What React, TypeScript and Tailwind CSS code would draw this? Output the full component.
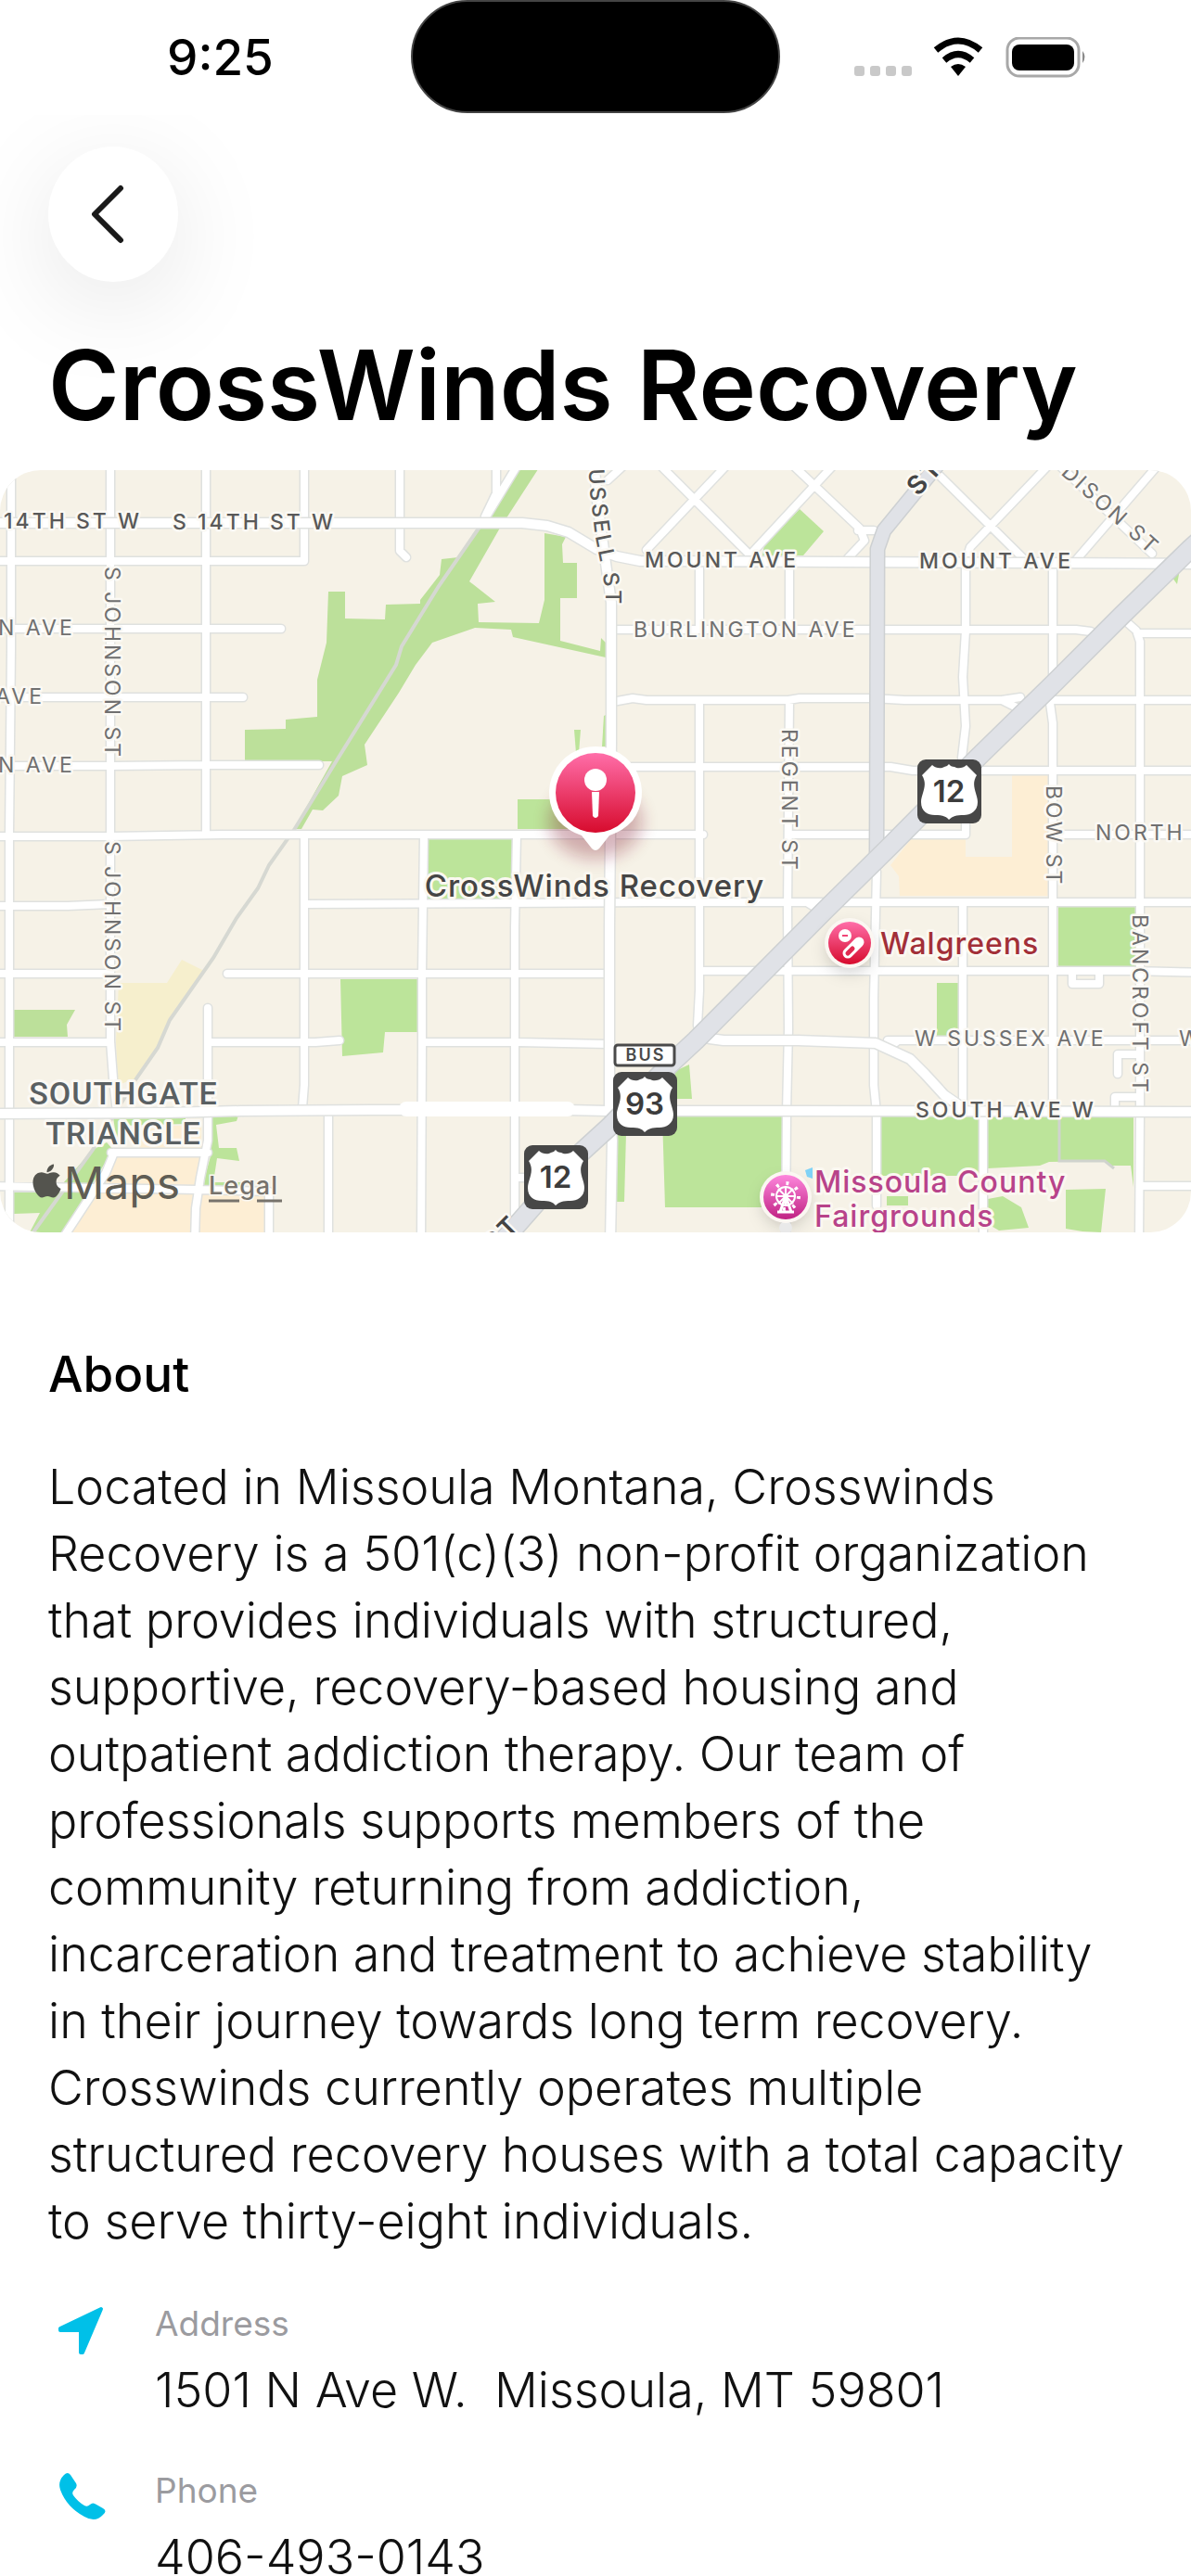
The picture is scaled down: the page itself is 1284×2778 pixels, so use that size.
import type { ReactNode } from 'react';
import { FaApple } from 'react-icons/fa';

interface Area {
  fill: string;
  points: string;
}

interface StreetLabel {
  text: string;
  x: number;
  y: number;
  rotate?: number;
  major?: boolean;
}

const GREEN = '#bce49a';
const WOODS = '#bce09a';
const SHOPS = '#fdeed4';
const SAND = '#f6efcd';

const AREAS: Area[] = [
  {
    fill: WOODS,
    points:
      '354,638 372,638 372,667 415,668 416,652 453,651 453,647 474,620 476,603 494,601 560,500 584,500 538,571 506,627 534,649 515,651 516,671 581,672 587,647 587,575 610,579 606,587 607,607 622,607 622,645 604,645 604,691 647,702 648,688 653,693 653,709 553,687 551,679 512,677 466,693 448,717 430,747 393,803 396,825 369,837 365,858 348,874 337,873 325,894 317,894 358,821 264,821 264,787 308,786 308,776 342,773 342,733 352,693',
  },
  { fill: GREEN, points: '619,787 626,787 624,812 621,812' },
  { fill: GREEN, points: '651,772 655,770 655,805 649,805' },
  { fill: GREEN, points: '558,862 620,862 620,894 558,894' },
  { fill: GREEN, points: '461,905 552,905 552,970 461,970' },
  { fill: GREEN, points: '862,549 888,573 866,599 822,599 824,587' },
  { fill: GREEN, points: '1272,614 1264,623 1269,630' },
  { fill: WOODS, points: '15,1089 81,1089 72,1105 73,1118 15,1118' },
  { fill: GREEN, points: '367,1056 450,1056 450,1113 415,1113 413,1135 369,1139' },
  { fill: SAND, points: '128,1060 180,1060 196,1035 220,1047 183,1100 170,1130 147,1163 127,1170 125,1123' },
  { fill: GREEN, points: '122,1205 200,1205 200,1212 128,1214 126,1232' },
  { fill: SHOPS, points: '150,1214 217,1214 217,1238 150,1238' },
  {
    fill: GREEN,
    points:
      '228,1203 257,1203 255,1209 233,1213 236,1238 255,1238 258,1252 234,1249 230,1275 260,1275 260,1279 218,1279 227,1247',
  },
  { fill: GREEN, points: '100,1240 115,1232 122,1240 67,1329 32,1329 43,1308 15,1309 15,1284 68,1276' },
  { fill: SHOPS, points: '127,1247 217,1247 207,1330 76,1330' },
  { fill: SHOPS, points: '215,1288 287,1288 287,1330 214,1330' },
  { fill: GREEN, points: '728,1155 743,1148 746,1185 728,1185' },
  { fill: GREEN, points: '664,1222 675,1222 673,1296 664,1296' },
  { fill: GREEN, points: '714,1204 843,1204 843,1302 717,1302' },
  { fill: GREEN, points: '1141,978 1224,978 1224,1042 1141,1042' },
  { fill: GREEN, points: '1010,1060 1033,1060 1033,1117 1010,1117' },
  { fill: GREEN, points: '949,1204 1055,1204 1055,1268 949,1268' },
  {
    fill: GREEN,
    points: '1065,1205 1222,1205 1222,1280 1219,1257 1197,1257 1191,1252 1131,1253 1121,1257 1065,1260',
  },
  { fill: GREEN, points: '1149,1283 1192,1282 1187,1329 1167,1328 1149,1325' },
  { fill: GREEN, points: '1065,1293 1081,1290 1101,1302 1109,1324 1077,1327 1065,1320' },
  { fill: GREEN, points: '956,1290 979,1290 979,1300 956,1300' },
  { fill: '#7fd3f7', points: '868,1262 876,1259 876,1271 870,1269' },
  {
    fill: SHOPS,
    points: '982,905 1041,905 1041,924 1091,924 1091,836 1130,836 1130,966 970,966 969,945 960,933',
  },
];

const MINOR_ROADS = [
  'M12 500 V700 L10 900 V1340',
  'M119 500 V1123 L122 1163 L126 1200',
  'M222 500 V899',
  'M328 500 V605 H-10',
  'M431 500 V594 L438 601',
  'M-10 678 H303',
  'M-10 752 H262',
  'M-10 826 L120 826 L222 825 H344',
  'M-10 902 L118 902 L240 900 H758',
  'M535 500 V532 L523 557',
  'M557 503 L520 564',
  'M328 900 V1170 L326 1195',
  'M-10 977 H73 L118 975',
  'M328 975 L550 974 L700 973 H1300',
  'M-10 1050 H119',
  'M245 1050 H652',
  'M756 1047 H1220 L1300 1049',
  'M-10 1124 H119',
  'M228 1124 H340 L366 1122',
  'M455 1124 H560 L656 1126',
  'M224 1087 V1230 L216 1270 L211 1303 L210 1340',
  'M354 1200 V1340',
  'M457 900 L455 1050 L455 1130 L454 1340',
  'M557 900 L555 1000 V1310',
  'M555 1270 H575',
  'M-10 1279 L213 1283 L290 1285 V1340',
  'M120 1243 H224',
  'M123 1243 L114 1265 L70 1332',
  'M754 606 V679',
  'M851 606 V679',
  'M659 679 H1160 L1176 681',
  'M660 757 L682 753 L697 755 H850 L862 753 H940 L975 755 H1080 L1096 763',
  'M1080 755 L1100 752',
  'M754 755 V1068 L752 1106',
  'M851 755 L849 980 L850 1110 L848 1200 L847 1340',
  'M680 827 H960 L984 831 H1300',
  'M850 900 H1041 V860',
  'M1041 606 V680 L1038 730 L1041 783 L1037 817',
  'M1135 606 V740 L1132 758 L1135 780 V1195',
  'M1134 755 H1300',
  'M1216 672 L1225 680 L1229 692 V1200 L1228 1340',
  'M1227 683 H1300',
  'M1134 900 H1300',
  'M860 973 H870 L878 978',
  'M945 940 L942 1077 V1170 L945 1200 V1300',
  'M1038 973 V1190',
  'M957 1122 H1300',
  'M957 1130 L966 1124',
  'M1060 1200 V1340',
  'M1156 1049 V1061 H1185 V1049',
  'M1205 1158 V1137 H1229',
  'M1202 1196 V1183 H1229',
  'M1229 1279 H1300',
  'M710 500 L807 597',
  'M785 500 L697 593',
  'M680 495 L655 518',
  'M900 500 L810 597',
  'M853 500 L927 570 L932 583 L914 602',
  'M925 572 H942',
  'M1013 513 L1105 604',
  'M1132 500 L1046 590 L1041 606',
  'M1248 502 L1160 604',
  'M1140 500 L1242 597',
];

const MAJOR_ROADS = [
  'M-10 564 H563 L590 567 L613 574 L643 592 L665 600 L690 605 L900 606 L1300 608',
  'M640 495 L645 550 L652 600 L659 650 V800 L657 1000 L657 1190 L660 1230 L658 1340',
  'M-10 1201 L180 1200 L260 1198 L400 1197 H610 L655 1198 H860 L1300 1199',
  'M765 1120 L780 1122 H860 L944 1125 L981 1142 L997 1158 L1018 1181 L1037 1194',
];

const US_HIGHWAY = [
  'M1310 568 L1284 591 L1210 663 L1136 737 L1054 817 L960 912 L887 984 L750 1122 L722 1148 L657 1215 L623 1246 L545 1335',
];

const STEPHENS_AVE = ['M1016 495 L953 572 L946 592 L945 930'];

const STREETS: StreetLabel[] = [
  { text: '14TH ST W', x: 4, y: 570, major: true },
  { text: 'S 14TH ST W', x: 186, y: 571, major: true },
  { text: 'N AVE', x: -2, y: 685 },
  { text: 'AVE', x: -5, y: 759 },
  { text: 'N AVE', x: -2, y: 833 },
  { text: 'S JOHNSON ST', x: 113, y: 611, rotate: 90 },
  { text: 'S JOHNSON ST', x: 113, y: 907, rotate: 90 },
  { text: 'MOUNT AVE', x: 695, y: 612, major: true },
  { text: 'MOUNT AVE', x: 991, y: 613, major: true },
  { text: 'BURLINGTON AVE', x: 683, y: 687 },
  { text: 'REGENT ST', x: 843, y: 786, rotate: 90 },
  { text: 'DISON ST', x: 1143, y: 511, rotate: 42 },
  { text: 'BOW ST', x: 1128, y: 847, rotate: 90 },
  { text: 'NORTH', x: 1181, y: 906 },
  { text: 'BANCROFT ST', x: 1221, y: 986, rotate: 90 },
  { text: 'W SUSSEX AVE', x: 986, y: 1128 },
  { text: 'W', x: 1271, y: 1128 },
  { text: 'SOUTH AVE W', x: 987, y: 1205, major: true },
];

const Roads = ({ paths, fill, casing, width }: { paths: string[]; fill: string; casing: string; width: number }) => (
  <>
    <path d={paths.join(' ')} fill="none" stroke={casing} strokeWidth={width + 3} strokeLinecap="round" strokeLinejoin="round" />
    <path d={paths.join(' ')} fill="none" stroke={fill} strokeWidth={width} strokeLinecap="round" strokeLinejoin="round" />
  </>
);

const Shield = ({ x, y, route }: { x: number; y: number; route: string }) => (
  <g transform={`translate(${x} ${y})`}>
    <rect width="69" height="69" rx="9" fill="#474747" />
    <path
      d="M16 6 C20 10 26 10 29 8 Q32 8 34 5 Q36 8 40 8 C43 10 49 10 53 6 L64 17 C57 28 65 37 65 46 C65 56 57 60 50 60 C42 60 38 61 34 65 C31 61 27 60 19 60 C11 60 4 56 4 46 C4 37 12 28 5 17 Z"
      fill="#fff"
    />
    <text x="34" y="46" textAnchor="middle" fill="#3c3c3c" className="text-[33px] font-semibold">
      {route}
    </text>
  </g>
);

const FacilityMap = () => (
  <svg viewBox="0 507 1284 822" className="block w-full rounded-[44px]" role="img" aria-label="Map of CrossWinds Recovery">
    <defs>
      <linearGradient id="pin" x1="0" y1="0" x2="0" y2="1">
        <stop offset="0" stopColor="#ff6ea9" />
        <stop offset="1" stopColor="#d70b2d" />
      </linearGradient>
      <linearGradient id="fair" x1="0" y1="0" x2="0" y2="1">
        <stop offset="0" stopColor="#fd86dc" />
        <stop offset="1" stopColor="#c02283" />
      </linearGradient>
      <filter id="soft" x="-50%" y="-50%" width="200%" height="200%">
        <feGaussianBlur stdDeviation="9" />
      </filter>
      <path id="russell" d="M634 488 L636 530 L642 580 L650 620 L653 640 V690" />
    </defs>

    <rect y="507" width="1284" height="822" fill="#f6f2e7" />
    {AREAS.map((area) => (
      <polygon key={area.points} points={area.points} fill={area.fill} />
    ))}

    {/* Rail line and footpaths */}
    <path
      d="M520 564 L473 632 L433 697 L427 717 L363 820 L317 895 L290 933 L278 958 L255 990 L230 1033 L183 1100 L170 1130 L147 1163 L100 1240 L35 1330"
      fill="none"
      stroke="#d6d8d2"
      strokeWidth="4"
    />
    <path d="M1142 1207 V1252 H1191 L1201 1260" fill="none" stroke="#d0d3ce" strokeWidth="3" />

    <Roads paths={MINOR_ROADS} fill="#fff" casing="#dfe1df" width={8} />
    <Roads paths={MAJOR_ROADS} fill="#fff" casing="#dfe1df" width={10} />
    <path d="M438 1196 H612" stroke="#fff" strokeWidth="16" strokeLinecap="round" />
    <Roads paths={STEPHENS_AVE} fill="#e0e2e7" casing="#cdd0d2" width={14} />
    <Roads paths={US_HIGHWAY} fill="#e0e2e7" casing="#cdd0d2" width={19} />

    {/* Street names */}
    <g stroke="#fbf9f4" strokeWidth="5" strokeLinejoin="round" paintOrder="stroke" className="text-[23px] tracking-[3px]">
      {STREETS.map((street) => (
        <text
          key={`${street.text}-${street.x}-${street.y}`}
          transform={`translate(${street.x} ${street.y}) rotate(${street.rotate ?? 0})`}
          fill={street.major ? '#595959' : '#707070'}
          className={street.major ? 'font-medium' : undefined}
        >
          {street.text}
        </text>
      ))}
      <text fill="#595959" className="font-medium">
        <textPath href="#russell">RUSSELL ST</textPath>
      </text>
      <text transform="translate(990 536) rotate(-48)" fill="#444" className="text-[28px] font-semibold">ST</text>
      <text transform="translate(533 1352) rotate(-45)" fill="#444" className="text-[28px] font-semibold">ST</text>
    </g>

    <g
      fill="#5a6062"
      stroke="#fbf9f4"
      strokeWidth="6"
      strokeLinejoin="round"
      paintOrder="stroke"
      textAnchor="middle"
      className="font-['Roboto',sans-serif] text-[34px] font-medium tracking-[1px]"
    >
      <text x="133" y="1191">SOUTHGATE</text>
      <text x="133" y="1234">TRIANGLE</text>
    </g>

    <Shield x={989} y={819} route="12" />
    <rect x="663" y="1127" width="64" height="22" rx="3" fill="#fff" stroke="#4a4a4a" strokeWidth="3" />
    <text x="696" y="1144" textAnchor="middle" fill="#4a4a4a" className="text-[18px] font-semibold tracking-[2px]">BUS</text>
    <Shield x={661} y={1156} route="93" />
    <Shield x={565} y={1235} route="12" />

    {/* Walgreens */}
    <circle cx="916" cy="1024" r="24" fill="#00000033" filter="url(#soft)" />
    <circle cx="916" cy="1017" r="27" fill="#fbf7f2" />
    <circle cx="916" cy="1017" r="23" fill="url(#pin)" />
    <circle cx="911" cy="1009" r="7" fill="#fff" />
    <path d="M908 1009 H914" stroke="#f04577" strokeWidth="2" />
    <path d="M926 1016 L914 1028" stroke="#fff" strokeWidth="11" strokeLinecap="round" />
    <path d="M919 1023 L914 1028" stroke="#e02a50" strokeWidth="5" strokeLinecap="round" />

    {/* Fairgrounds */}
    <circle cx="847" cy="1298" r="24" fill="#00000033" filter="url(#soft)" />
    <circle cx="847" cy="1324" r="7" fill="#e9e9e9" />
    <circle cx="847" cy="1291" r="28" fill="#fbf7f2" />
    <circle cx="847" cy="1291" r="24" fill="url(#fair)" />
    <g fill="none" stroke="#fff" strokeWidth="2">
      <circle cx="847" cy="1290" r="10" />
      <circle cx="847" cy="1290" r="14" strokeWidth="4" strokeDasharray="3 8" />
      <path d="M847 1279 V1301 M836 1290 H858 M839 1282 L855 1298 M855 1282 L839 1298" />
      <path d="M847 1290 L841 1307 M847 1290 L853 1307 M838 1307 H856" strokeWidth="3" />
    </g>

    {/* Place names */}
    <g stroke="#fbf8f1" strokeWidth="6" strokeLinejoin="round" paintOrder="stroke" className="text-[32px] font-medium tracking-[1px]">
      <text x="949" y="1029" fill="#a22f38">Walgreens</text>
      <text x="878" y="1286" fill="#b8438a">Missoula County</text>
      <text x="878" y="1323" fill="#b8438a">Fairgrounds</text>
      <text x="641" y="967" textAnchor="middle" fill="#454545" className="text-[33px]">CrossWinds Recovery</text>
    </g>

    {/* Selected place */}
    <ellipse cx="642" cy="886" rx="50" ry="40" fill="#7a1028" opacity="0.3" filter="url(#soft)" />
    <path d="M642 805 A50 50 0 0 1 682 885 Q672 896 657 901 L646 915 Q642 919 638 915 L627 901 Q612 896 602 885 A50 50 0 0 1 642 805 Z" fill="#fff" />
    <circle cx="642" cy="855" r="43" fill="url(#pin)" />
    <circle cx="642" cy="841" r="12" fill="#fff" />
    <path d="M638 854 H646 L645 880 Q642 884 639 880 Z" fill="#fff" />

    {/* Attribution */}
    <FaApple x="30" y="1253" size={41} color="#54544e" />
    <text x="69" y="1293" fill="#5f5d54" className="text-[48px]">Maps</text>
    <a href="#legal">
      <text x="225" y="1288" fill="#77736c" stroke="#fbf8f1" strokeWidth="3" paintOrder="stroke" className="text-[27px] font-medium tracking-[1px]">
        Legal
      </text>
      <path d="M225 1295 H258 M277 1295 H304" stroke="#77736c" strokeWidth="3" />
    </a>
  </svg>
);

const StatusBar = () => (
  <div className="grid h-[124px] shrink-0 grid-cols-[1fr_398px_1fr] items-center">
    <time className="pl-[180px] text-[53px] leading-[72px] font-medium">9:25</time>
    <div className="h-[122px] self-start rounded-[61px] border-2 border-[#444] bg-black" />
    <div className="flex items-center justify-end pr-[112px]">
      <svg viewBox="0 0 251 44" className="h-[44px] w-[251px]" aria-hidden="true">
        <g fill="#c9c9c9">
          <rect x="0" y="31" width="11" height="11" rx="3" />
          <rect x="17" y="31" width="11" height="11" rx="3" />
          <rect x="34" y="31" width="11" height="11" rx="3" />
          <rect x="51" y="31" width="11" height="11" rx="3" />
        </g>
        <g fill="none" stroke="#000" strokeWidth="7">
          <path d="M88 14 Q112 -6 136 14" />
          <path d="M97 25 Q112 12 127 25" />
        </g>
        <path d="M104 32 Q112 26 120 32 L112 42 Z" />
        <rect x="165" y="1" width="77" height="41" rx="13" fill="none" stroke="#a8a8a8" strokeWidth="3" />
        <rect x="170" y="8" width="67" height="28" rx="8" />
        <path d="M246 15 Q251 21 246 28 Z" fill="#8a8a8a" />
      </svg>
    </div>
  </div>
);

const ContactRow = ({ icon, label, children }: { icon: ReactNode; label: string; children: ReactNode }) => (
  <div className="flex">
    <div className="w-[115px] shrink-0 pt-[4px] pl-[8px] text-[#00c0e8]">{icon}</div>
    <div>
      <dt className="text-[37px] leading-[48px] text-[#9b9b9f]">{label}</dt>
      <dd className="mt-3 text-[52px] leading-[72px] font-light whitespace-pre-wrap text-[#111]">{children}</dd>
    </div>
  </div>
);

export default function App() {
  return (
    <div className="flex h-screen flex-col overflow-hidden bg-white font-['Inter',sans-serif] text-black">
      <StatusBar />
      <main className="min-h-0 flex-1 overflow-y-auto [scrollbar-width:none]">
        <div className="px-[52px] pt-[34px]">
          <button
            aria-label="Back"
            className="flex h-[146px] w-[140px] items-center justify-center rounded-[50%] bg-white shadow-[0_24px_110px_rgba(0,0,0,0.1)]"
          >
            <svg viewBox="0 0 40 64" className="mr-3 h-[64px] w-[40px]" fill="none" stroke="#1a1a1a" strokeWidth="6" strokeLinecap="round" strokeLinejoin="round">
              <path d="M34 4 L6 32 L34 60" />
            </svg>
          </button>
          <h1 className="mt-[51px] text-[104px] leading-[120px] font-semibold">CrossWinds Recovery</h1>
        </div>

        <div className="mt-8">
          <FacilityMap />
        </div>

        <div className="px-[52px] pt-[117px]">
          <h2 className="text-[53px] leading-[72px] font-medium">About</h2>
          <p className="mt-[50px] text-[52px] leading-[72px] font-light text-[#111]">
            Located in Missoula Montana, Crosswinds Recovery is a 501(c)(3) non-profit organization that provides
            individuals with structured, supportive, recovery-based housing and outpatient addiction therapy. Our team of
            professionals supports members of the community returning from addiction, incarceration and treatment to
            achieve stability in their journey towards long term recovery. Crosswinds currently operates multiple
            structured recovery houses with a total capacity to serve thirty-eight individuals.
          </p>

          <dl className="mt-[50px] space-y-12">
            <ContactRow
              label="Address"
              icon={
                <svg viewBox="0 0 54 54" className="h-[54px] w-[54px]" fill="currentColor" stroke="currentColor" strokeWidth="4" strokeLinejoin="round">
                  <path d="M49 4 L5 25 V27 H27 V51 H29 Z" />
                </svg>
              }
            >
              {'1501 N Ave W.  Missoula, MT 59801'}
            </ContactRow>
            <ContactRow
              label="Phone"
              icon={
                <svg viewBox="0 0 54 54" className="h-[54px] w-[54px]" fill="currentColor">
                  <path d="M9 3 Q13 -1 16 3 L22 12 Q24 16 20 19 Q17 22 19 25 Q24 32 31 36 Q34 38 37 35 Q40 32 44 35 L51 39 Q56 42 51 46 Q43 55 31 48 Q12 38 5 19 Q2 10 9 3 Z" />
                </svg>
              }
            >
              <a href="tel:4064930143">406-493-0143</a>
            </ContactRow>
          </dl>
        </div>
      </main>
    </div>
  );
}
